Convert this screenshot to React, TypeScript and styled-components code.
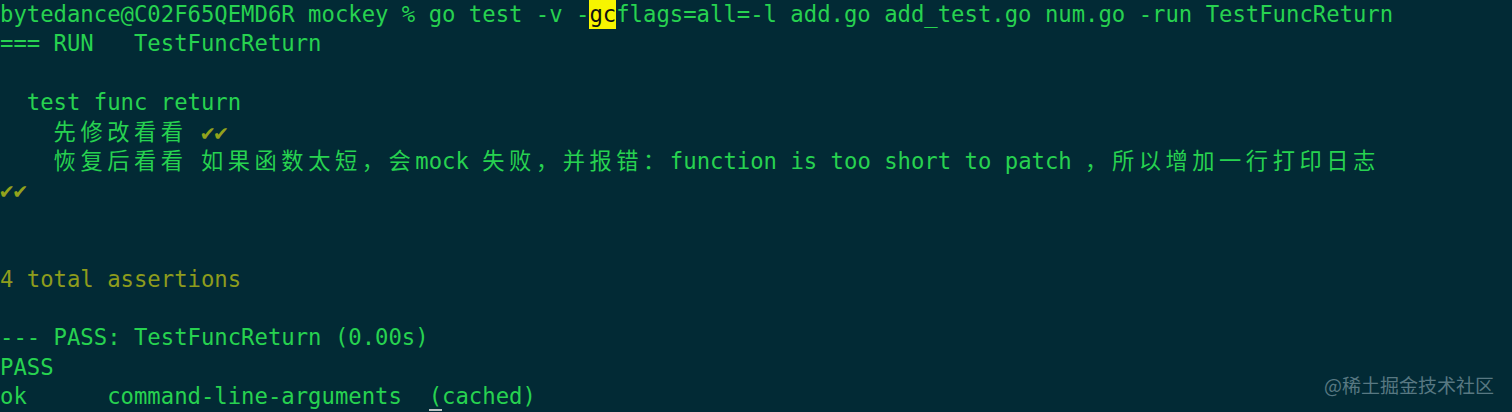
import React from "react";
import styled, { createGlobalStyle } from "styled-components";

const Global = createGlobalStyle`
  html, body {
    margin: 0;
    padding: 0;
    background: #022a35;
    overflow: hidden;
  }
`;

const Terminal = styled.div`
  position: relative;
  width: 1512px;
  height: 412px;
  box-sizing: border-box;
  padding: 0;
  background: #022a35;
  color: #27d250;
  font-family: "DejaVu Sans Mono", "Liberation Mono", "Noto Sans CJK SC", monospace;
  font-size: 22.25px;
  line-height: 29.4px;
  overflow: hidden;
`;

const Line = styled.div`
  height: 29.4px;
  white-space: pre;
`;

const Wide = styled.span`
  font-family: "DejaVu Sans Mono", "Noto Sans CJK SC", sans-serif;
  letter-spacing: calc(2ch - 1em);
`;

const Olive = styled.span`
  color: #8e9c1c;
`;

const Check = styled.span`
  display: inline-block;
  width: ${(p: { $cells: number }) => p.$cells}ch;
  color: #93a21c;
  font-family: "DejaVu Sans Mono", "DejaVu Sans", monospace;
  overflow: visible;
`;

const Highlight = styled.span`
  background: #f7f500;
  color: #111;
  display: inline-block;
  height: 29.4px;
`;

const CursorCell = styled.span`
  position: relative;
  &::after {
    content: "";
    position: absolute;
    left: 0;
    right: 0;
    bottom: -2px;
    height: 2px;
    background: #b9c1c1;
  }
`;

const Watermark = styled.div`
  position: absolute;
  right: 18px;
  top: 375px;
  font-family: "Noto Sans CJK SC", "Noto Sans", sans-serif;
  font-size: 19px;
  line-height: 20px;
  color: #587882;
  white-space: nowrap;
`;

export default function App() {
  return (
    <>
      <Global />
      <Terminal>
        <Line>
          bytedance@C02F65QEMD6R mockey % go test -v -<Highlight>gc</Highlight>flags=all=-l add.go add_test.go num.go -run TestFuncReturn
        </Line>
        <Line>=== RUN   TestFuncReturn</Line>
        <Line> </Line>
        <Line>  test func return</Line>
        <Line>
          {"    "}
          <Wide>先修改看看</Wide> <Check $cells={2}>✔✔</Check>
        </Line>
        <Line>
          {"    "}
          <Wide>恢复后看看</Wide> <Wide>如果函数太短，会</Wide>mock <Wide>失败，并报错：</Wide>function is too short to patch <Wide>，所以增加一行打印日志</Wide>
        </Line>
        <Line>
          <Check $cells={2}>✔✔</Check>
        </Line>
        <Line> </Line>
        <Line> </Line>
        <Line>
          <Olive>4 total assertions</Olive>
        </Line>
        <Line> </Line>
        <Line>--- PASS: TestFuncReturn (0.00s)</Line>
        <Line>PASS</Line>
        <Line>
          ok      command-line-arguments  <CursorCell>(</CursorCell>cached)
        </Line>
        <Watermark>@稀土掘金技术社区</Watermark>
      </Terminal>
    </>
  );
}
